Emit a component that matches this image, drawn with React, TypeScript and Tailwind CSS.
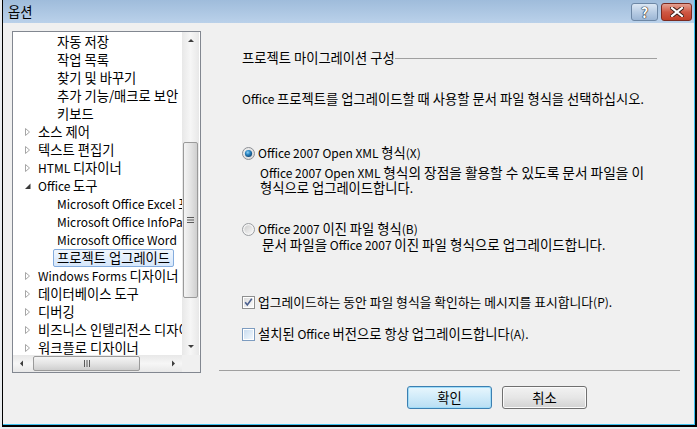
import React from "react";

type Row = { t: string; l: number; e?: "c" | "o"; sel?: boolean };

const rows: Row[] = [
  { t: "자동 저장", l: 2 },
  { t: "작업 목록", l: 2 },
  { t: "찾기 및 바꾸기", l: 2 },
  { t: "추가 기능/매크로 보안", l: 2 },
  { t: "키보드", l: 2 },
  { t: "소스 제어", l: 1, e: "c" },
  { t: "텍스트 편집기", l: 1, e: "c" },
  { t: "HTML 디자이너", l: 1, e: "c" },
  { t: "Office 도구", l: 1, e: "o" },
  { t: "Microsoft Office Excel 프로젝트", l: 2 },
  { t: "Microsoft Office InfoPath", l: 2 },
  { t: "Microsoft Office Word", l: 2 },
  { t: "프로젝트 업그레이드", l: 2, sel: true },
  { t: "Windows Forms 디자이너", l: 1, e: "c" },
  { t: "데이터베이스 도구", l: 1, e: "c" },
  { t: "디버깅", l: 1, e: "c" },
  { t: "비즈니스 인텔리전스 디자이너", l: 1, e: "c" },
  { t: "워크플로 디자이너", l: 1, e: "c" },
];

// Korean runs are drawn a little larger so that their width matches the reference's hangul.
function K({ t, k = "text-[13.3px]" }: { t: string; k?: string }) {
  const parts = t.split(/([\uAC00-\uD7A3][\uAC00-\uD7A3 /]*[\uAC00-\uD7A3]|[\uAC00-\uD7A3])/);
  return (
    <>
      {parts.map((p, i) =>
        i % 2 === 1 ? (
          <span key={i} className={k}>
            {p}
          </span>
        ) : (
          <React.Fragment key={i}>{p}</React.Fragment>
        )
      )}
    </>
  );
}

function Expander({ e }: { e?: "c" | "o" }) {
  if (e === "c")
    return (
      <svg width="8" height="10" viewBox="0 0 8 10" className="block">
        <path d="M1.5 1.5 L5.5 5 L1.5 8.5 Z" fill="#fff" stroke="#a6a6a6" strokeWidth="1" />
      </svg>
    );
  if (e === "o")
    return (
      <svg width="8" height="10" viewBox="0 0 8 10" className="block">
        <path d="M1 8 L6.5 8 L6.5 2.5 Z" fill="#3a3a3a" />
      </svg>
    );
  return null;
}

function RadioOn() {
  return (
    <svg width="13" height="13" viewBox="0 0 13 13" className="block">
      <defs>
        <linearGradient id="ro" x1="0" y1="0" x2="1" y2="1">
          <stop offset="0" stopColor="#f2f2f2" />
          <stop offset="1" stopColor="#d6d6d6" />
        </linearGradient>
        <radialGradient id="rd" cx="0.4" cy="0.35" r="0.7">
          <stop offset="0" stopColor="#8fd0f5" />
          <stop offset="0.45" stopColor="#2a86c2" />
          <stop offset="1" stopColor="#0c3f6e" />
        </radialGradient>
      </defs>
      <circle cx="6.5" cy="6.5" r="6" fill="url(#ro)" stroke="#8c8f94" strokeWidth="1" />
      <circle cx="6.5" cy="6.5" r="3.6" fill="url(#rd)" />
    </svg>
  );
}

function RadioOff() {
  return (
    <svg width="13" height="13" viewBox="0 0 13 13" className="block">
      <defs>
        <linearGradient id="rf" x1="0" y1="0" x2="1" y2="1">
          <stop offset="0" stopColor="#cfcfcf" />
          <stop offset="1" stopColor="#f6f6f6" />
        </linearGradient>
      </defs>
      <circle cx="6.5" cy="6.5" r="6" fill="#f4f4f4" stroke="#9a9da1" strokeWidth="1" />
      <circle cx="6.5" cy="6.5" r="4.2" fill="url(#rf)" />
    </svg>
  );
}

function CheckOn() {
  return (
    <svg width="13" height="13" viewBox="0 0 13 13" className="block">
      <defs>
        <linearGradient id="cb" x1="0" y1="0" x2="1" y2="1">
          <stop offset="0" stopColor="#dcdcdc" />
          <stop offset="1" stopColor="#fbfbfb" />
        </linearGradient>
      </defs>
      <rect x="0.5" y="0.5" width="12" height="12" fill="#fff" stroke="#8e8f8f" />
      <rect x="2" y="2" width="9" height="9" fill="url(#cb)" />
      <path d="M3.2 6.2 L5.3 9 L9.8 2.8" fill="none" stroke="#4a5f8e" strokeWidth="1.6" />
    </svg>
  );
}

function CheckOff() {
  return (
    <svg width="13" height="13" viewBox="0 0 13 13" className="block">
      <defs>
        <linearGradient id="cb2" x1="0" y1="0" x2="1" y2="1">
          <stop offset="0" stopColor="#c9dcef" />
          <stop offset="1" stopColor="#f2f8fe" />
        </linearGradient>
      </defs>
      <rect x="0.5" y="0.5" width="12" height="12" fill="#fff" stroke="#7d9cc0" />
      <rect x="2" y="2" width="9" height="9" fill="url(#cb2)" />
    </svg>
  );
}

function Arrow({ dir }: { dir: "up" | "down" | "left" | "right" }) {
  const d =
    dir === "up"
      ? "M1 5 L4 2 L7 5 Z"
      : dir === "down"
      ? "M1 2 L4 5 L7 2 Z"
      : dir === "left"
      ? "M5 0.5 L2 3.5 L5 6.5 Z"
      : "M2 0.5 L5 3.5 L2 6.5 Z";
  const w = dir === "up" || dir === "down" ? 8 : 7;
  const h = 7;
  return (
    <svg width={w} height={h} viewBox={`0 0 ${w} ${h}`} className="block">
      <path d={d} fill="#3e3e3e" />
    </svg>
  );
}

export default function App() {
  return (
    <div className="w-[697px] h-[429px] bg-[#e9ecef] overflow-hidden font-['Noto_Sans_CJK_KR','Noto_Sans',sans-serif] text-[12px] text-black">
      <div className="ml-[2px] w-[695px] h-[427px] border-l border-l-black border-r-2 border-r-black border-b-2 border-b-black bg-[#f0f0f0]">
        <div className="w-[692px] h-[425px] border-r border-r-[#3fc1ee] border-b border-b-[#3fc1ee] flex flex-col">
          {/* Title bar */}
          <div className="h-[23px] flex items-start bg-gradient-to-b from-[#9fbcdb] to-[#bad1ea]">
            <div className="pl-[5px] h-[23px] flex items-center leading-[16px]">
              <K t="옵션" />
            </div>
            <div className="ml-auto flex gap-[3px] pt-[3px] pr-[2px]">
              <div className="w-[27px] h-[18px] rounded-[3px] border border-[#6d87a5] bg-gradient-to-b from-[#dbe7f4] via-[#b9cde4] to-[#9cb6d5] flex items-center justify-center">
                <span className="text-white font-bold text-[14px] leading-none [text-shadow:0_0_1px_#222,0_0_1px_#222,0_0_1px_#222]">?</span>
              </div>
              <div className="w-[31px] h-[18px] rounded-[3px] border border-[#7b2a20] bg-gradient-to-b from-[#e3a193] via-[#cf5844] to-[#c23e26] flex items-center justify-center">
                <svg width="14" height="10" viewBox="0 0 14 10" className="block">
                  <path d="M2 1 L12 9 M12 1 L2 9" stroke="#3a1a14" strokeWidth="4" strokeLinecap="square" />
                  <path d="M2 1 L12 9 M12 1 L2 9" stroke="#fff" strokeWidth="2.2" strokeLinecap="square" />
                </svg>
              </div>
            </div>
          </div>

          {/* Body */}
          <div className="flex-1 flex flex-col pt-[8px]">
            <div className="flex">
              {/* Tree box */}
              <div className="ml-[9px] w-[189px] h-[342px] border border-[#828790] bg-white flex flex-col">
                <div className="flex h-[323px]">
                  <div className="w-[169px] h-[323px] overflow-hidden pt-[1px]">
                    {rows.map((r, i) => (
                      <div key={i} className="h-[18px] flex items-center whitespace-nowrap">
                        {r.l === 1 ? (
                          <>
                            <div className="w-[8px] ml-[11px] mr-[6px] flex items-center">
                              <Expander e={r.e} />
                            </div>
                            <span className="leading-[16px]">
                              <K t={r.t} />
                            </span>
                          </>
                        ) : r.sel ? (
                          <div className="ml-[40px] h-[18px] px-[3px] flex items-center rounded-[2px] border border-[#84acdd] bg-gradient-to-b from-[#f0f6fd] to-[#d6e7fb]">
                            <span className="leading-[16px]">
                              <K t={r.t} />
                            </span>
                          </div>
                        ) : (
                          <span className="ml-[44px] leading-[16px]">
                            <K t={r.t} />
                          </span>
                        )}
                      </div>
                    ))}
                  </div>
                  {/* vertical scrollbar */}
                  <div className="w-[17px] h-[323px] bg-gradient-to-r from-[#e8e8e8] via-[#f6f6f6] to-[#e8e8e8] flex flex-col items-center">
                    <div className="h-[17px] w-[17px] flex items-center justify-center">
                      <Arrow dir="up" />
                    </div>
                    <div className="mt-[93px] w-[15px] h-[156px] rounded-[2px] border border-[#9a9a9a] bg-gradient-to-r from-[#f4f4f4] via-[#e4e4e4] to-[#cfcfcf] flex items-center justify-center">
                      <svg width="7" height="8" viewBox="0 0 7 8" className="block">
                        <path d="M0 1.5 H7 M0 4 H7 M0 6.5 H7" stroke="#5a5a5a" strokeWidth="1" />
                      </svg>
                    </div>
                    <div className="mt-[40px] h-[17px] w-[17px] flex items-center justify-center">
                      <Arrow dir="down" />
                    </div>
                  </div>
                </div>
                {/* horizontal scrollbar */}
                <div className="flex h-[17px]">
                  <div className="w-[169px] h-[17px] bg-gradient-to-b from-[#e8e8e8] via-[#f6f6f6] to-[#e8e8e8] flex items-center">
                    <div className="w-[17px] h-[17px] flex items-center justify-center">
                      <Arrow dir="left" />
                    </div>
                    <div className="ml-[3px] w-[107px] h-[15px] rounded-[2px] border border-[#9a9a9a] bg-gradient-to-b from-[#f4f4f4] via-[#e4e4e4] to-[#cfcfcf] flex items-center justify-center">
                      <svg width="8" height="7" viewBox="0 0 8 7" className="block">
                        <path d="M1.5 0 V7 M4 0 V7 M6.5 0 V7" stroke="#5a5a5a" strokeWidth="1" />
                      </svg>
                    </div>
                    <div className="ml-auto w-[17px] h-[17px] flex items-center justify-center">
                      <Arrow dir="right" />
                    </div>
                  </div>
                  <div className="w-[18px] h-[17px] bg-[#f0f0f0]" />
                </div>
              </div>

              {/* Right panel */}
              <div className="flex-1 flex flex-col">
                <div className="pl-[41px] flex flex-col">
                  <div className="mt-[19px] flex items-center h-[16px]">
                    <span className="leading-[16px] whitespace-nowrap">
                      <K t="프로젝트 마이그레이션 구성" />
                    </span>
                    <div className="flex-1 mr-[37px] h-px bg-[#a0a0a0]" />
                  </div>
                  <div className="mt-[25px] leading-[16px] whitespace-nowrap">
                    <K t="Office 프로젝트를 업그레이드할 때 사용할 문서 파일 형식을 선택하십시오." />
                  </div>
                  <div className="mt-[38px] flex items-center h-[16px]">
                    <RadioOn />
                    <span className="ml-[3px] leading-[16px] whitespace-nowrap">
                      <K t="Office 2007 Open XML 형식(X)" />
                    </span>
                  </div>
                  <div className="mt-[4px] pl-[18px] leading-[15px] whitespace-nowrap">
                    <div>
                      <K t="Office 2007 Open XML 형식의 장점을 활용할 수 있도록 문서 파일을 이" k="text-[13.7px]" />
                    </div>
                    <div>
                      <K t="형식으로 업그레이드합니다." />
                    </div>
                  </div>
                  <div className="mt-[26px] flex items-center h-[16px]">
                    <RadioOff />
                    <span className="ml-[3px] leading-[16px] whitespace-nowrap">
                      <K t="Office 2007 이진 파일 형식(B)" />
                    </span>
                  </div>
                  <div className="pl-[20px] leading-[15px] whitespace-nowrap">
                    <K t="문서 파일을 Office 2007 이진 파일 형식으로 업그레이드합니다." k="text-[13.5px]" />
                  </div>
                  <div className="mt-[42px] flex items-center h-[16px]">
                    <CheckOn />
                    <span className="ml-[3px] leading-[16px] whitespace-nowrap">
                      <K t="업그레이드하는 동안 파일 형식을 확인하는 메시지를 표시합니다(P)." k="text-[12.8px]" />
                    </span>
                  </div>
                  <div className="mt-[16px] flex items-center h-[16px]">
                    <CheckOff />
                    <span className="ml-[3px] leading-[16px] whitespace-nowrap">
                      <K t="설치된 Office 버전으로 항상 업그레이드합니다(A)." />
                    </span>
                  </div>
                </div>
                <div className="mt-[28px] ml-[18px] w-[461px] h-px bg-[#a0a0a0]" />
              </div>
            </div>

            {/* Buttons */}
            <div className="mt-[13px] pl-[404px] flex gap-[10px]">
              <div className="w-[85px] h-[23px] rounded-[3px] border border-[#3c7fb1] bg-gradient-to-b from-[#e8f6fd] via-[#d0ebf9] to-[#b9def3] shadow-[inset_0_0_0_1px_#9fdcf8] flex items-center justify-center leading-[16px]">
                <K t="확인" />
              </div>
              <div className="w-[85px] h-[23px] rounded-[3px] border border-[#707070] bg-gradient-to-b from-[#f2f2f2] via-[#e6e6e6] to-[#d2d2d2] shadow-[inset_0_0_0_1px_#fbfbfb] flex items-center justify-center leading-[16px]">
                <K t="취소" />
              </div>
            </div>
          </div>
        </div>
      </div>
    </div>
  );
}
